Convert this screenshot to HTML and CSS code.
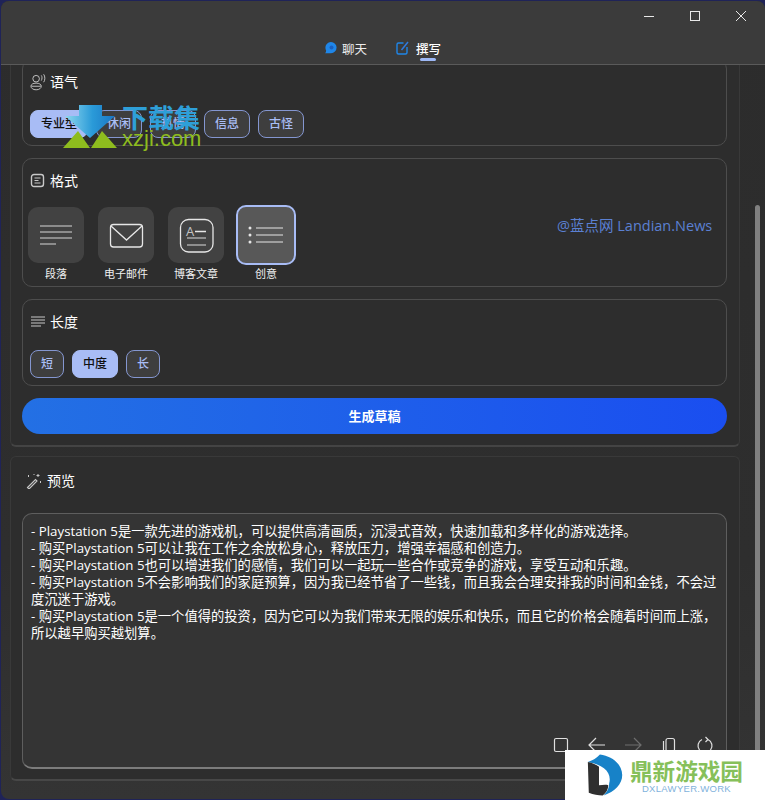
FILE: index.html
```html
<!DOCTYPE html>
<html lang="zh-CN">
<head>
    <meta charset="UTF-8">
    <title>撰写</title>
    <link rel="stylesheet" href="styles.css">
</head>
<body>
    <div class="window">
        <header class="titlebar">
            <div class="controls">
                <svg class="ctl" viewBox="0 0 12 12"><path d="M1 6.500h10"/></svg>
                <svg class="ctl" viewBox="0 0 12 12"><rect x="1.500" y="1.500" width="9" height="9"/></svg>
                <svg class="ctl" viewBox="0 0 12 12"><path d="M1 1l10 10M11 1L1 11"/></svg>
            </div>
            <nav class="tabs">
                <div class="tab">
                    <svg width="13" height="14" viewBox="0 0 13 14"><path d="M7 1a5.600 5.600 0 0 1 0 11.200H1.200c.7-.8 1-1.600.9-2.800A5.700 5.700 0 0 1 7 1z" fill="#1f86e8"/><circle cx="7.500" cy="6.500" r="2" fill="#1a5fc0"/></svg>
                    <span>聊天</span>
                </div>
                <div class="tab tab-active">
                    <svg width="13" height="14" viewBox="0 0 13 14" fill="none"><path d="M7.500 2H2.500A1.500 1.500 0 0 0 1 3.500v8A1.500 1.500 0 0 0 2.500 13h7a1.500 1.500 0 0 0 1.500-1.500V6" stroke="#1f86e8" stroke-width="1.400"/><path d="M5.500 9L12 1" stroke="#2f7be0" stroke-width="1.500"/></svg>
                    <span>撰写</span>
                </div>
            </nav>
        </header>

        <main class="content">
            <section class="card card-top">
                <div class="group group-tone">
                    <h3 class="group-title">
                        <svg class="head-icon head-icon-tall" viewBox="0 0 17 18" fill="none"><circle cx="6.500" cy="5.500" r="3.500"/><path d="M1 13.500c0-2 2.200-3.300 5.500-3.300s5.500 1.300 5.500 3.300-2.200 3.800-5.500 3.800S1 15.500 1 13.500zM1.500 13.500h10"/><path d="M12 2c1 1.200 1 3.800 0 5.500M14.500 .8c1.700 2 1.700 6.400 0 8.400"/></svg>
                        语气
                    </h3>
                    <div class="chips">
                        <span class="chip chip-on">专业型</span>
                        <span class="chip">休闲</span>
                        <span class="chip">热情</span>
                        <span class="chip">信息</span>
                        <span class="chip">古怪</span>
                    </div>
                </div>

                <div class="group group-format">
                    <h3 class="group-title">
                        <svg class="head-icon" viewBox="0 0 16 16" fill="none"><rect x="1.500" y="1.500" width="12" height="12" rx="2.500" stroke-width="1.400"/><path d="M4.500 5h6M4.500 7.500h4M4.500 10h6"/></svg>
                        格式
                    </h3>
                    <div class="formats">
                        <div class="format">
                            <div class="tile">
                                <svg viewBox="0 0 56 56" fill="none" stroke="#8c8c8c" stroke-width="2"><path d="M12 19h32M12 25h32M12 31h32M12 37h16"/></svg>
                            </div>
                            <span>段落</span>
                        </div>
                        <div class="format">
                            <div class="tile">
                                <svg viewBox="0 0 56 56" fill="none" stroke="#e6e6e6" stroke-width="1.300"><rect x="12.500" y="17.500" width="32" height="22.500" rx="3"/><path d="M13 19l15.500 14L44 19"/></svg>
                            </div>
                            <span>电子邮件</span>
                        </div>
                        <div class="format">
                            <div class="tile">
                                <svg viewBox="0 0 56 56" fill="none" stroke="#e6e6e6" stroke-width="1.300"><rect x="12.500" y="12.500" width="32.500" height="32.500" rx="8"/><text x="18" y="29" class="tile-letter">A</text><path d="M27 24.500h11"/><path d="M19 31h19M19 38h19" stroke="#a8a8a8" stroke-width="1.600"/></svg>
                            </div>
                            <span>博客文章</span>
                        </div>
                        <div class="format">
                            <div class="tile tile-on">
                                <svg viewBox="0 0 60 60" fill="none" stroke="#e6e6e6" stroke-width="1.200"><path d="M20 23h27M20 30h27M20 37h27"/><circle cx="14" cy="23" r="1.500" fill="#e6e6e6" stroke="none"/><circle cx="14" cy="30" r="1.500" fill="#e6e6e6" stroke="none"/><circle cx="14" cy="37" r="1.500" fill="#e6e6e6" stroke="none"/></svg>
                            </div>
                            <span>创意</span>
                        </div>
                    </div>
                </div>

                <div class="group">
                    <h3 class="group-title">
                        <svg class="head-icon" viewBox="0 0 16 16" fill="none" stroke-width="1.300"><path d="M1 3h14M1 6h14M1 9h14M1 12h10"/></svg>
                        长度
                    </h3>
                    <div class="chips">
                        <span class="chip">短</span>
                        <span class="chip chip-on">中度</span>
                        <span class="chip">长</span>
                    </div>
                </div>

                <button class="generate">生成草稿</button>
            </section>

            <section class="card card-preview">
                <h3 class="group-title preview-title">
                    <svg class="head-icon" viewBox="0 0 16 16" fill="none"><path d="M1.500 14.500l8-8 1.500 1.500-8 8z" stroke-width="1.100"/><path d="M12 1v3M10.500 2.500h3M14.500 8v2M2.500 2v2M8 1v1" stroke-width="1"/></svg>
                    预览
                </h3>
                <div class="result">
                    <div class="result-text">
                        <p>- Playstation 5是一款先进的游戏机，可以提供高清画质，沉浸式音效，快速加载和多样化的游戏选择。</p>
                        <p>- 购买Playstation 5可以让我在工作之余放松身心，释放压力，增强幸福感和创造力。</p>
                        <p>- 购买Playstation 5也可以增进我们的感情，我们可以一起玩一些合作或竞争的游戏，享受互动和乐趣。</p>
                        <p>- 购买Playstation 5不会影响我们的家庭预算，因为我已经节省了一些钱，而且我会合理安排我的时间和金钱，不会过<br>度沉迷于游戏。</p>
                        <p>- 购买Playstation 5是一个值得的投资，因为它可以为我们带来无限的娱乐和快乐，而且它的价格会随着时间而上涨，<br>所以越早购买越划算。</p>
                    </div>
                    <div class="actions">
                        <span class="action"><svg viewBox="0 0 20 20"><rect x="3.500" y="3.500" width="13" height="13" rx="1.500"/></svg></span>
                        <span class="action"><svg viewBox="0 0 20 20"><path d="M18 10H2M9 3l-7 7 7 7"/></svg></span>
                        <span class="action action-off"><svg viewBox="0 0 20 20"><path d="M2 10h16M11 3l7 7-7 7"/></svg></span>
                        <span class="action"><svg viewBox="0 0 20 20"><rect x="7" y="3.500" width="8.500" height="13" rx="2"/><path d="M4.500 6v10"/></svg></span>
                        <span class="action"><svg viewBox="0 0 20 20"><path d="M7 4.500a7 7 0 1 0 6 0M10.500 2L13 4.500 10.500 7"/></svg></span>
                    </div>
                </div>
            </section>
        </main>

        <div class="scrollbar"></div>
    </div>

    <!-- watermarks -->
    <div class="mark-xzji">
        <svg width="55" height="44" viewBox="0 0 55 44">
            <defs>
                <linearGradient id="arrowFill" x1="0" x2="1" y1="0" y2="0">
                    <stop offset="0" stop-color="#8fd8ee"/>
                    <stop offset="0.55" stop-color="#2a9ad8"/>
                    <stop offset="1" stop-color="#1a76c4"/>
                </linearGradient>
            </defs>
            <path d="M16 0h23v11h13L27 33 2 11h14z" fill="url(#arrowFill)"/>
            <path d="M0 43l15-17 12 17zM28 43l11-17 15 17z" fill="#8ebc1e"/>
        </svg>
        <div class="xzji-text">
            <span class="xzji-cn">下载集</span>
            <span class="xzji-en">xzji.com</span>
        </div>
    </div>
    <div class="mark-landian">@蓝点网 Landian.News</div>
    <div class="mark-dx">
        <svg width="39" height="46" viewBox="0 0 42 46">
            <path d="M2 9C8 7 11 5 15 1c14 2 24 11 24 22 0 10-8 18-20 22 4-4 6-8 6-13 3-12-6-20-23-23z" fill="#1782c8"/>
            <path d="M2 9c5 1 9 3 12 5v20c3 0 7-1 10 0 0 4-2 8-6 11-5 0-10-1-15-3z" fill="#2f2f2f"/>
        </svg>
        <div class="dx-text">
            <span class="dx-cn">鼎新游戏园</span>
            <span class="dx-en">DXLAWYER.WORK</span>
        </div>
    </div>
</body>
</html>
```

FILE: styles.css
```css
* { box-sizing: border-box; }
html, body { margin: 0; height: 100%; }
body { background-color: #1f2358; font-family: "Open Sans", "Noto Sans CJK SC", sans-serif; color: #f2f2f2; overflow: hidden; position: relative; }
h3, p { margin: 0; font-weight: normal; }

.window { position: relative; margin: 1px 0 0 1px; height: 798px; display: flex; flex-direction: column; background: linear-gradient(#2c2c2c, #2e2e2e 70%, #343434); border-radius: 8px; overflow: hidden; }

.titlebar { position: relative; height: 64px; flex-shrink: 0; background-color: #3b3b3b; border-bottom: 1px solid #5a5a5a; }
.controls { display: flex; justify-content: flex-end; gap: 34px; padding: 9px 18px 0 0; }
.ctl { width: 12px; height: 12px; fill: none; stroke: #e8e8e8; stroke-width: 1; }
.tabs { position: absolute; left: 0; right: 0; top: 37px; display: flex; justify-content: center; gap: 29px; padding-right: 1px; }
.tab { position: relative; display: flex; align-items: center; gap: 5px; height: 20px; font-size: 12.500px; color: #ececec; }
.tab-active { gap: 7px; font-weight: 500; color: #fff; }
.tab-active::after { content: ""; position: absolute; left: 24px; bottom: -3px; width: 16px; height: 3px; border-radius: 2px; background-color: #9db8f5; }

.content { flex: 1; padding-left: 9px; overflow: hidden; }
.card { width: 730px; padding: 0 12px 12px; background-color: #2d2d2d; border: 1px solid #393939; border-bottom: 2px solid #444; border-radius: 6px; }
.card-top { display: flow-root; height: 382px; border-top: none; border-radius: 0 0 6px 6px; }
.card-preview { height: 325px; margin-top: 9px; padding-bottom: 11px; border-bottom-color: #474747; }

.group { margin-left: -1px; width: 705px; margin-top: 12px; padding: 12px 7px 7px; border: 1px solid #4d4d4d; border-radius: 10px; }
.group-tone { margin-top: -6px; height: 87px; }
.group-format { padding-bottom: 5px; height: 129px; }
.group-title { display: flex; align-items: center; gap: 4px; height: 20px; font-size: 14px; line-height: 20px; color: #fff; }
.head-icon { width: 16px; height: 16px; flex-shrink: 0; stroke: #c8c8c8; stroke-width: 1; }
.head-icon-tall { height: 18px; }

.chips { display: flex; gap: 8px; margin-top: 18px; }
.chip { height: 28px; padding: 0 10px; border: 1px solid #8496d0; border-radius: 8px; background-color: #3e3e3e; font-size: 12px; font-weight: 500; line-height: 26px; color: #a9bdf5; }
.chip-on { background-color: #a8bcf5; border-color: #a8bcf5; color: #101010; }

.formats { display: flex; gap: 14px; margin: 16px 0 0 -2px; }
.format { width: 56px; display: flex; flex-direction: column; align-items: center; }
.format span { margin-top: 3px; font-size: 11px; line-height: 16px; white-space: nowrap; color: #f0f0f0; }
.tile { width: 56px; height: 56px; border-radius: 10px; background-color: #424242; flex-shrink: 0; }
.tile svg { display: block; width: 100%; height: 100%; }
.tile-letter { font-size: 13px; fill: #c4c4c4; stroke: none; }
.tile-on { width: 60px; height: 60px; margin: -2px -2px -2px; border: 2px solid #a8bcf5; background-color: #585858; }
.tile-on svg { margin: -2px; width: 60px; height: 60px; }

.generate { display: block; width: 705px; height: 36px; margin: 12px 0 0 -1px; padding: 0 0 2px; border: none; border-radius: 18px; background: linear-gradient(90deg, #2370e4, #1a4ef0); color: #fff; font-family: inherit; font-size: 13px; font-weight: 700; }

.preview-title { padding: 14px 0 0 3px; height: 34px; align-items: flex-start; gap: 5px; }
.preview-title .head-icon { margin-top: 2px; }
.result { margin: 22px 0 0 -1px; width: 705px; height: 256px; display: flex; flex-direction: column; padding: 9px 3px 12px 8px; background-color: #343434; border: 1px solid #5e5e5e; border-bottom: 2px solid #7c7c7c; border-radius: 10px; }
.result-text { font-size: 13.300px; line-height: 17px; color: #fff; white-space: nowrap; }
.actions { display: flex; justify-content: flex-end; margin-top: auto; }
.action { width: 36px; height: 20px; display: flex; justify-content: center; }
.action svg { width: 20px; height: 20px; fill: none; stroke: #e0e0e0; stroke-width: 1.200; }
.action-off svg { stroke: #6e6e6e; }

.scrollbar { position: absolute; left: 754px; top: 204px; bottom: 0; width: 5px; border-radius: 3px 3px 0 0; background-color: #808080; }

.mark-xzji { position: absolute; left: 63px; top: 105px; display: flex; gap: 4px; }
.xzji-text { display: flex; flex-direction: column; }
.xzji-cn { font-size: 26px; font-weight: 700; line-height: 24px; color: #2e9fd8; font-family: "Noto Sans CJK SC", sans-serif; }
.xzji-en { font-family: "Liberation Sans", sans-serif; font-size: 22px; line-height: 20px; color: #8ebc1e; }

.mark-landian { position: absolute; left: 557px; top: 216px; font-size: 14.500px; line-height: 20px; color: #5b80d2; white-space: nowrap; }

.mark-dx { position: absolute; left: 565px; top: 750px; width: 200px; height: 50px; padding: 2px 0 0 21px; display: flex; gap: 5px; background-color: #fff; }
.dx-text { display: flex; flex-direction: column; align-items: center; padding-top: 7px; }
.dx-cn { font-family: "Noto Sans CJK SC", sans-serif; font-size: 22.600px; font-weight: 700; line-height: 24px; color: #86c05a; white-space: nowrap; }
.dx-en { font-family: "Liberation Sans", sans-serif; font-size: 9.500px; line-height: 11px; color: #7fb2dc; letter-spacing: 0.300px; white-space: nowrap; }
```
